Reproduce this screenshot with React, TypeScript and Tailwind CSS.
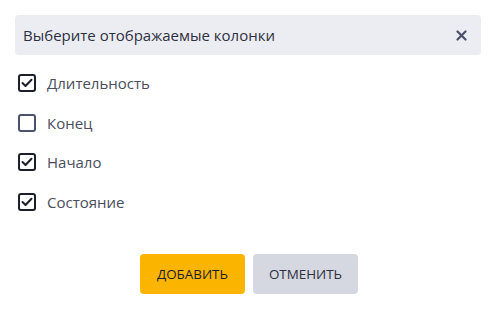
import React, { useState } from 'react';

const columns = [
    { id: 'duration', label: 'Длительность', checked: true },
    { id: 'end', label: 'Конец', checked: false },
    { id: 'start', label: 'Начало', checked: true },
    { id: 'state', label: 'Состояние', checked: true },
];

const App: React.FC = () => {
    const [items, setItems] = useState(columns);

    const toggle = (id: string) => {
        setItems(items.map(item => item.id === id ? { ...item, checked: !item.checked } : item));
    };

    return (
        <div className="w-[496px] h-[312px] bg-white px-[15px] pt-[15px] font-['Open_Sans',sans-serif]">
            <div className="h-10 flex items-center justify-between rounded bg-[#ecedf3] pl-2 pr-[14px]">
                <span className="text-[15px] text-[#2d3040]">Выберите отображаемые колонки</span>
                <button className="text-[#4a5068]">
                    <svg width="11" height="11" viewBox="0 0 11 11">
                        <path d="M1.5 1.5 L9.5 9.5 M9.5 1.5 L1.5 9.5" stroke="currentColor" strokeWidth="2.2" strokeLinecap="round" />
                    </svg>
                </button>
            </div>
            <div className="mt-[19px] flex flex-col gap-[21.67px]">
                {items.map(item => (
                    <label key={item.id} className="flex items-center h-[18px] pl-[3px] cursor-pointer" onClick={() => toggle(item.id)}>
                        <span className={`w-[18px] h-[18px] shrink-0 rounded-[3px] border-2 flex items-center justify-center ${item.checked ? 'border-[#1c1f2b]' : 'border-[#4b5270]'}`}>
                            {item.checked && (
                                <svg width="12" height="10" viewBox="0 0 12 10">
                                    <path d="M1.5 5 L4.5 8 L10.5 1.8" stroke="#1c1f2b" strokeWidth="2" fill="none" strokeLinecap="round" strokeLinejoin="round" />
                                </svg>
                            )}
                        </span>
                        <span className="ml-[11px] text-[15px] leading-[18px] text-[#4a4d5c]">{item.label}</span>
                    </label>
                ))}
            </div>
            <div className="mt-[43px] flex justify-center gap-2 pl-[2px]">
                <button className="w-[105px] h-10 rounded bg-[#fbb500] text-[13.4px] font-medium text-[#1c1f2b]">ДОБАВИТЬ</button>
                <button className="w-[105px] h-10 rounded bg-[#d5d8e1] text-[13.4px] font-medium text-[#2d3040]">ОТМЕНИТЬ</button>
            </div>
        </div>
    );
};

export default App;
